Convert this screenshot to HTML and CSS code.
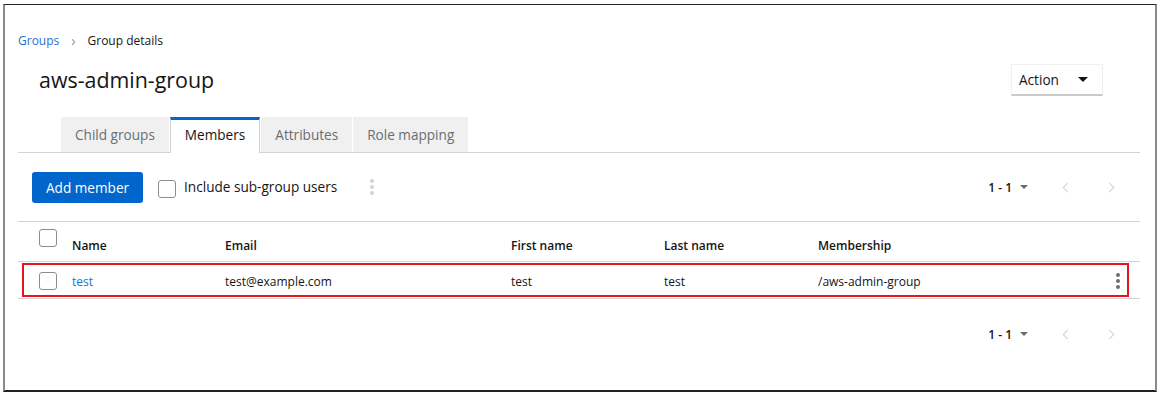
FILE: index.html
```html
<!DOCTYPE html>
<html lang="en">
<head>
    <meta charset="UTF-8">
    <title>Group details</title>
    <link rel="stylesheet" href="styles.css">
</head>
<body>
    <div class="frame">
        <nav class="breadcrumb">
            <a href="#">Groups</a>
            <span class="crumb-sep">&rsaquo;</span>
            <span>Group details</span>
        </nav>

        <div class="page-header">
            <h1>aws-admin-group</h1>
            <button class="action-toggle">Action <span class="caret"></span></button>
        </div>

        <div class="tabs">
            <div class="tab">Child groups</div>
            <div class="tab current">Members</div>
            <div class="tab">Attributes</div>
            <div class="tab">Role mapping</div>
        </div>

        <div class="toolbar">
            <button class="primary-button">Add member</button>
            <label class="check-label"><span class="checkbox"></span>Include sub-group users</label>
            <span class="kebab disabled"><i></i><i></i><i></i></span>
            <div class="pager">
                <span class="pager-count">1 - 1</span>
                <span class="pager-caret"></span>
                <span class="chev prev"></span>
                <span class="chev next"></span>
            </div>
        </div>

        <div class="table">
            <div class="row head">
                <div class="cell check"><span class="checkbox"></span></div>
                <div class="cell">Name</div>
                <div class="cell">Email</div>
                <div class="cell">First name</div>
                <div class="cell">Last name</div>
                <div class="cell">Membership</div>
                <div class="cell"></div>
            </div>
            <div class="row body">
                <div class="cell check"><span class="checkbox"></span></div>
                <div class="cell"><a href="#">test</a></div>
                <div class="cell">test@example.com</div>
                <div class="cell">test</div>
                <div class="cell">test</div>
                <div class="cell">/aws-admin-group</div>
                <div class="cell actions"><span class="kebab"><i></i><i></i><i></i></span></div>
                <div class="highlight"></div>
            </div>
        </div>

        <div class="pager bottom">
            <span class="pager-count">1 - 1</span>
            <span class="pager-caret"></span>
            <span class="chev prev"></span>
            <span class="chev next"></span>
        </div>
    </div>
</body>
</html>
```

FILE: styles.css
```css
body {
    margin: 0;
    background-color: #fff;
    font-family: "Open Sans", "Liberation Sans", sans-serif;
    color: #151515;
}
a {
    color: #1f6fd0;
    text-decoration: none;
}
.frame {
    margin: 4px 3px 0 3px;
    height: 388px;
    box-sizing: border-box;
    border-top: 1px solid #222;
    border-left: 2px solid #8a8a8a;
    border-right: 2px solid #8a8a8a;
    border-bottom: 2px solid #222;
    padding: 0 15px 0 13px;
}
.breadcrumb {
    padding-top: 27px;
    font-size: 12px;
    line-height: 18px;
    display: flex;
    align-items: center;
    gap: 12px;
}
.crumb-sep {
    color: #8a8d90;
    font-size: 14px;
}
.page-header {
    display: flex;
    align-items: center;
    justify-content: space-between;
    margin-top: 14px;
    height: 31px;
    padding: 0 37px 0 21px;
}
h1 {
    margin: 0;
    font-size: 21.4px;
    font-weight: 400;
    line-height: 28px;
}
.action-toggle {
    width: 92px;
    height: 32px;
    display: flex;
    align-items: center;
    justify-content: space-between;
    padding: 0 14px 0 7px;
    background-color: #fff;
    border: 1px solid #f0f0f0;
    border-bottom: 2px solid #c9cacc;
    font-family: inherit;
    font-size: 13.6px;
    color: #151515;
}
.caret {
    width: 0;
    height: 0;
    border-left: 5px solid transparent;
    border-right: 5px solid transparent;
    border-top: 5px solid #151515;
}
.tabs {
    display: flex;
    gap: 1px;
    margin-top: 22px;
    padding-left: 43px;
    border-bottom: 1px solid #d2d2d2;
}
.tab {
    height: 35px;
    box-sizing: border-box;
    padding: 5px 14px 0 14px;
    line-height: 20px;
    border-top: 3px solid #f0f0f0;
    background-color: #f0f0f0;
    font-size: 13.6px;
    color: #6a6e73;
    margin-bottom: -1px;
}
.tab.current {
    background-color: #fff;
    border-top-color: #0066cc;
    border-left: 1px solid #d2d2d2;
    border-right: 1px solid #d2d2d2;
    color: #151515;
    height: 36px;
}
.toolbar {
    display: flex;
    align-items: center;
    height: 69px;
    box-sizing: border-box;
    padding: 0 27px 0 14px;
    border-bottom: 1px solid #d2d2d2;
}
.primary-button {
    height: 31px;
    padding: 0 14px;
    border: none;
    border-radius: 3px;
    background-color: #0066cc;
    color: #fff;
    font-family: inherit;
    font-size: 13.6px;
    margin-right: 15px;
}
.check-label {
    display: flex;
    align-items: center;
    font-size: 13.6px;
    line-height: 18px;
}
.check-label .checkbox {
    margin-right: 8px;
    margin-top: 4px;
}
.checkbox {
    display: inline-block;
    width: 18px;
    height: 18px;
    box-sizing: border-box;
    border: 1px solid #8a8d90;
    border-radius: 3px;
    background-color: #fff;
}
.kebab {
    display: inline-flex;
    flex-direction: column;
    gap: 2px;
}
.kebab i {
    display: block;
    width: 4px;
    height: 4px;
    border-radius: 50%;
    background-color: #6a6e73;
}
.kebab.disabled {
    margin-left: 33px;
}
.kebab.disabled i {
    background-color: #d2d2d2;
}
.pager {
    margin-left: auto;
    display: flex;
    align-items: center;
    font-size: 12px;
    font-weight: 600;
}
.pager-caret {
    width: 0;
    height: 0;
    margin-left: 8px;
    border-left: 4px solid transparent;
    border-right: 4px solid transparent;
    border-top: 4px solid #6a6e73;
}
.chev {
    width: 6px;
    height: 6px;
    border-left: 1.5px solid #d2d2d2;
    border-bottom: 1.5px solid #d2d2d2;
}
.chev.prev {
    margin-left: 36px;
    transform: rotate(45deg);
}
.chev.next {
    margin-left: 35px;
    transform: rotate(-135deg);
}
.table {
    font-size: 12px;
}
.row {
    display: grid;
    grid-template-columns: 54px 153px 286px 153px 154px 1fr 40px;
    border-bottom: 1px solid #d2d2d2;
    position: relative;
}
.row.head {
    height: 39px;
    align-items: end;
    font-weight: 600;
}
.row.head .cell {
    padding-bottom: 7px;
}
.row.head .cell.check {
    align-self: start;
    padding: 7px 0 0 21px;
}
.row.body {
    height: 36px;
    align-items: center;
}
.row.body .cell {
    padding-top: 2px;
}
.cell.check {
    padding-left: 21px;
    display: flex;
}
.row.body .cell.check {
    padding-top: 1px;
}
.cell.actions {
    display: flex;
    justify-content: flex-start;
    padding-left: 16px;
}
.highlight {
    position: absolute;
    left: 4px;
    top: 1px;
    width: 1107px;
    height: 34px;
    box-sizing: border-box;
    border: 2px solid #e4161c;
    pointer-events: none;
}
.pager.bottom {
    height: 70px;
    padding-right: 27px;
    justify-content: flex-end;
}
```
